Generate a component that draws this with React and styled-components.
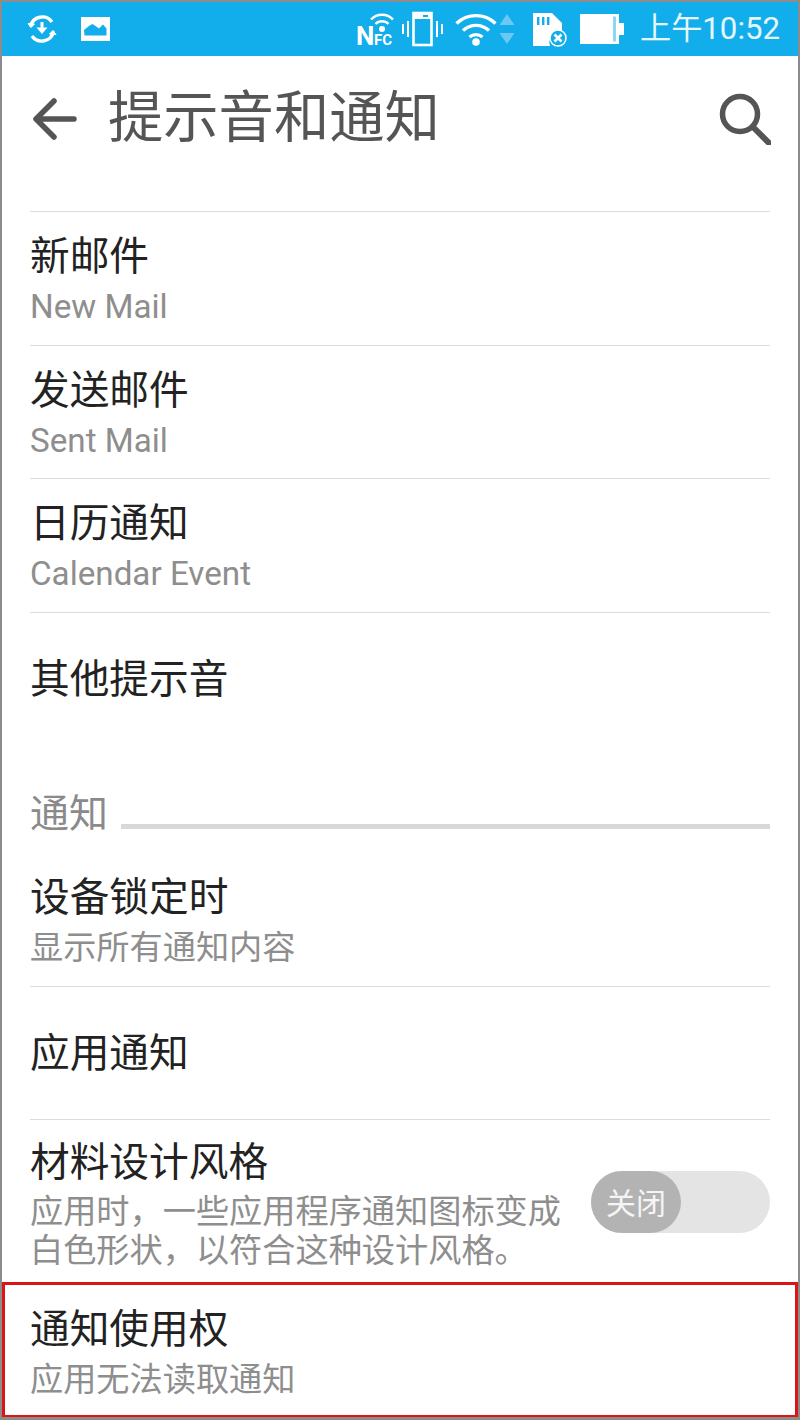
import React from 'react'
import styled, { createGlobalStyle } from 'styled-components'

const CJK = '"Noto Sans CJK SC", "Noto Sans", sans-serif'

const GlobalStyle = createGlobalStyle`
  html, body {
    margin: 0;
    padding: 0;
    background: #fff;
  }
  * {
    box-sizing: border-box;
  }
`

const Screen = styled.div`
  width: 800px;
  height: 1420px;
  overflow: hidden;
  display: flex;
  flex-direction: column;
  background: #fff;
  border: 2px solid #8c8c8c;
  border-bottom-width: 3px;
  font-family: ${CJK};
`

const StatusBar = styled.div`
  flex: none;
  height: 54px;
  display: flex;
  align-items: center;
  background: #12adeb;
  padding: 0 18px 0 25px;
  color: #fff;
`

const StatusLeft = styled.div`
  display: flex;
  align-items: center;
  gap: 24px;
`

const StatusRight = styled.div`
  margin-left: auto;
  display: flex;
  align-items: center;
`

const StatusIcon = styled.svg`
  display: block;
  flex: none;
  overflow: visible;
  margin-left: ${p => p.$left || 0}px;
`

const Clock = styled.span`
  margin-left: 16px;
  font-family: Roboto, ${CJK};
  font-size: 31.2px;
  line-height: 40px;
  color: #e6f6fd;
  white-space: nowrap;
`

const AppBar = styled.div`
  flex: none;
  height: 125px;
  display: flex;
  align-items: center;
  padding: 0 27px 0 31px;
`

const PageTitle = styled.h1`
  margin: 0 0 12px 31px;
  font-size: 55.3px;
  font-weight: 400;
  line-height: 70px;
  color: #555;
  white-space: nowrap;
`

const BarIcon = styled.svg`
  display: block;
  flex: none;
  margin-left: ${p => (p.$end ? 'auto' : '0')};
`

const List = styled.div`
  flex: 1;
  display: flex;
  flex-direction: column;
  padding-top: 30px;
`

const Row = styled.div`
  flex: none;
  height: ${p => p.$height || 134}px;
  margin: 0 28px;
  padding-top: ${p => p.$top || 16}px;
  border-top: ${p => (p.$plain ? '0' : '1px solid #dcdcdc')};
`

const RowTitle = styled.div`
  font-size: 39.7px;
  line-height: 50px;
  color: #222;
  white-space: nowrap;
`

const RowSub = styled.div`
  font-family: Roboto, ${CJK};
  font-size: 33.2px;
  line-height: 40px;
  margin-top: 9px;
  color: #8e8e8e;
  white-space: nowrap;
`

const Section = styled.div`
  flex: none;
  height: 107px;
  margin: 0 28px;
  padding-top: 39px;
  display: flex;
  align-items: flex-start;
`

const SectionLabel = styled.div`
  font-size: 39px;
  line-height: 50px;
  color: #8a8a8a;
`

const SectionLine = styled.div`
  flex: 1;
  height: 5px;
  margin: 39px 0 0 13px;
  background: #d8d8d8;
`

const SwitchRow = styled.div`
  display: flex;
  align-items: flex-start;
  justify-content: space-between;
`

const SwitchText = styled.div`
  width: 540px;
`

const WrapSub = styled(RowSub)`
  margin-top: 8px;
  line-height: 39px;
`

const Toggle = styled.div`
  flex: none;
  width: 179px;
  height: 62px;
  margin-top: 37px;
  border-radius: 31px;
  background: #e4e4e4;
`

const Knob = styled.div`
  width: 90px;
  height: 62px;
  border-radius: 31px;
  background: #b3b3b3;
  color: #f5f5f5;
  font-size: 30px;
  line-height: 60px;
  text-align: center;
`

const Highlight = styled.div`
  flex: none;
  height: 136px;
  border: 3px solid #dc1414;
  padding: 16px 0 0 25px;
  margin-top: -1px;
`

const SyncIcon = () => (
  <StatusIcon width="30" height="30" viewBox="0 0 30 30" fill="none" stroke="#fff" strokeWidth="3.4">
    <path d="M3.500 12.500A12 12 0 0 1 25 8" />
    <path d="M26.500 17.500A12 12 0 0 1 5 22" />
    <path d="M1 9.500l3 4 3.500-3.500z" fill="#fff" strokeWidth="1" />
    <path d="M29 20.500l-3-4-3.500 3.500z" fill="#fff" strokeWidth="1" />
    <path d="M15 8v9" strokeWidth="3" />
    <path d="M9.500 13.500h11L15 20z" fill="#fff" stroke="none" />
  </StatusIcon>
)

const PictureIcon = () => (
  <StatusIcon width="29" height="24" viewBox="0 0 29 24">
    <path fillRule="evenodd" fill="#fff" d="M0 0h29v24H0zM3.500 18.500h22v-7l-3.500-4-4 4-3.500-2.500-3-2-3.500 2-5 4z" />
  </StatusIcon>
)

const NfcIcon = () => (
  <StatusIcon width="42" height="36" viewBox="0 0 42 36">
    <g fill="none" stroke="#fff" strokeWidth="2.400">
      <path d="M16 8.500a15 15 0 0 1 22 0" />
      <path d="M20.500 13a9 9 0 0 1 13 0" />
    </g>
    <circle cx="27" cy="18" r="3" fill="#fff" />
    <text x="1" y="34" fill="#fff" fontFamily="Roboto, sans-serif" fontWeight="700" fontSize="26">N</text>
    <text x="19" y="34" fill="#fff" fontFamily="Roboto, sans-serif" fontWeight="700" fontSize="15">FC</text>
  </StatusIcon>
)

const VibrateIcon = () => (
  <StatusIcon $left={5} width="41" height="36" viewBox="0 0 41 36">
    <rect x="11.500" y="2" width="18" height="32" fill="none" stroke="#fff" strokeWidth="2.600" />
    <path d="M12 2h17v6H12z" fill="#fff" />
    <path d="M21 4h5v2h-5z" fill="#12adeb" />
    <path d="M6 10v16M1 13v10M35 10v16M40 13v10" stroke="#fff" strokeWidth="2" fill="none" />
  </StatusIcon>
)

const WifiIcon = () => (
  <StatusIcon $left={12} width="42" height="36" viewBox="0 0 42 36">
    <g fill="none" stroke="#fff" strokeWidth="3.400">
      <path d="M1.500 12.500a28 28 0 0 1 39 0" />
      <path d="M8 19.500a19 19 0 0 1 26 0" />
      <path d="M14.500 26a10 10 0 0 1 13 0" />
    </g>
    <circle cx="21" cy="31" r="3.800" fill="#fff" />
  </StatusIcon>
)

const DataArrows = () => (
  <StatusIcon $left={2} width="16" height="30" viewBox="0 0 16 30">
    <path d="M8 0l7.500 11H.5zM8 30L.5 19h15z" fill="#6bc9f1" />
  </StatusIcon>
)

const SdIcon = () => (
  <StatusIcon $left={17} width="35" height="35" viewBox="0 0 35 35">
    <path d="M1 1h19l10 10v10a10 10 0 0 0-12 13H1z" fill="#fff" />
    <path d="M5 5h2.400v8H5zM10 5h2.400v8H10zM15 5h2.400v8H15z" fill="#12adeb" />
    <circle cx="26" cy="26" r="8" fill="#12adeb" stroke="#fff" strokeWidth="1.500" />
    <path d="M22.500 22.500l7 7M29.500 22.500l-7 7" stroke="#fff" strokeWidth="2.600" />
  </StatusIcon>
)

const BatteryIcon = () => (
  <StatusIcon $left={13} width="44" height="30" viewBox="0 0 44 30">
    <path d="M0 0h39v30H0zM39 9h5v12h-5z" fill="#fff" />
    <path d="M33 2.500h3v25h-3z" fill="#8fd6f4" />
  </StatusIcon>
)

const BackIcon = () => (
  <BarIcon width="44" height="44" viewBox="0 0 44 44" fill="none" stroke="#555" strokeWidth="5.500" strokeLinecap="round" strokeLinejoin="round">
    <path d="M41 22H4M21 4L3 22l18 18" />
  </BarIcon>
)

const SearchIcon = () => (
  <BarIcon $end width="52" height="52" viewBox="0 0 52 52" fill="none" stroke="#555" strokeLinecap="round">
    <circle cx="21" cy="21" r="17.500" strokeWidth="5.500" />
    <path d="M34 34l16 16" strokeWidth="6" />
  </BarIcon>
)

export default function App () {
  return (
    <Screen>
      <GlobalStyle />
      <StatusBar>
        <StatusLeft>
          <SyncIcon />
          <PictureIcon />
        </StatusLeft>
        <StatusRight>
          <NfcIcon />
          <VibrateIcon />
          <WifiIcon />
          <DataArrows />
          <SdIcon />
          <BatteryIcon />
          <Clock>上午10:52</Clock>
        </StatusRight>
      </StatusBar>
      <AppBar>
        <BackIcon />
        <PageTitle>提示音和通知</PageTitle>
        <SearchIcon />
      </AppBar>
      <List>
        <Row>
          <RowTitle>新邮件</RowTitle>
          <RowSub>New Mail</RowSub>
        </Row>
        <Row $height={133}>
          <RowTitle>发送邮件</RowTitle>
          <RowSub>Sent Mail</RowSub>
        </Row>
        <Row>
          <RowTitle>日历通知</RowTitle>
          <RowSub>Calendar Event</RowSub>
        </Row>
        <Row $top={38}>
          <RowTitle>其他提示音</RowTitle>
        </Row>
        <Section>
          <SectionLabel>通知</SectionLabel>
          <SectionLine />
        </Section>
        <Row $plain $height={133}>
          <RowTitle>设备锁定时</RowTitle>
          <RowSub>显示所有通知内容</RowSub>
        </Row>
        <Row $top={38} $height={133}>
          <RowTitle>应用通知</RowTitle>
        </Row>
        <Row $top={14} $height={164}>
          <SwitchRow>
            <SwitchText>
              <RowTitle>材料设计风格</RowTitle>
              <WrapSub>应用时，一些应用程序通知图标变成<br />白色形状，以符合这种设计风格。</WrapSub>
            </SwitchText>
            <Toggle>
              <Knob>关闭</Knob>
            </Toggle>
          </SwitchRow>
        </Row>
        <Highlight>
          <RowTitle>通知使用权</RowTitle>
          <RowSub>应用无法读取通知</RowSub>
        </Highlight>
      </List>
    </Screen>
  )
}
